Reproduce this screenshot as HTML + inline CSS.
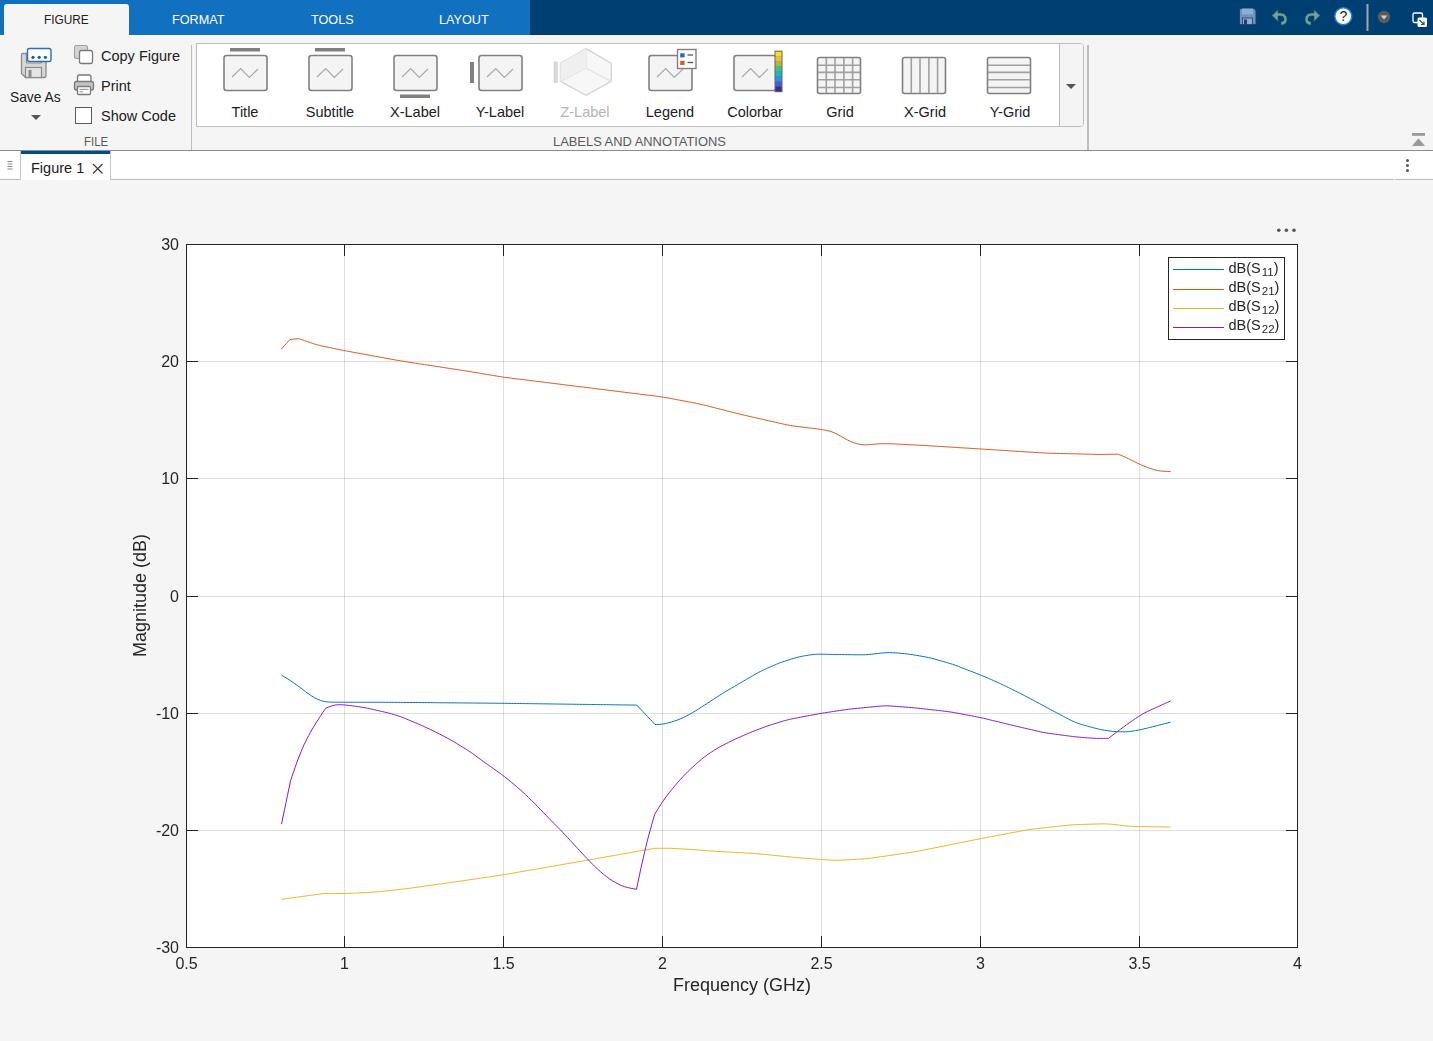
<!DOCTYPE html>
<html><head><meta charset="utf-8">
<style>
*{margin:0;padding:0;box-sizing:border-box}
html,body{width:1433px;height:1041px;overflow:hidden;background:#f5f5f5;font-family:"Liberation Sans",sans-serif;color:#212121}
.abs{position:absolute}
#topbar{position:absolute;left:0;top:0;width:1433px;height:35px;background:#003f72}
#tabs{position:absolute;left:0;top:0;width:530px;height:35px;background:#1170bf}
.tab{position:absolute;top:1.5px;height:35px;line-height:36px;font-size:13.6px;color:#fff;white-space:nowrap;transform:scaleX(0.93);transform-origin:0 0}
#tabfig{position:absolute;left:4px;top:4px;width:125px;height:31px;background:#f5f5f5;border-radius:3px 3px 0 0}
#strip{position:absolute;left:0;top:35px;width:1433px;height:116px;background:#f5f5f5;border-bottom:1px solid #8c8c8c}
.t14{font-size:14.5px;white-space:nowrap;position:absolute}
.glab{position:absolute;top:103.8px;font-size:14.5px;white-space:nowrap;text-align:center;width:84px;margin-left:-42px}
#figbar{position:absolute;left:0;top:151px;width:1433px;height:29px;background:#fff;border-bottom:1px solid #bdbdbd}
svg{position:absolute;left:0;top:0}
</style></head><body>
<div id="topbar"></div>
<div id="tabs"></div>
<div id="tabfig"></div>
<div class="tab" style="left:44px;color:#212121;transform:scaleX(0.87)">FIGURE</div>
<div class="tab" style="left:171.5px">FORMAT</div>
<div class="tab" style="left:310.5px">TOOLS</div>
<div class="tab" style="left:438.5px">LAYOUT</div>

<div id="strip"></div>
<!-- gallery box -->
<div class="abs" style="left:196px;top:43px;width:888px;height:84px;background:#fff;border:1px solid #bdbdbd;border-radius:0 4px 4px 0"></div>
<div class="abs" style="left:1059px;top:44px;width:24px;height:82px;background:#f4f4f4;border-left:1px solid #bdbdbd;border-radius:0 3px 3px 0"></div>
<div class="abs" style="left:191px;top:45px;width:1px;height:105px;background:#bdbdbd"></div>
<div class="abs" style="left:1087px;top:45px;width:2px;height:105px;background:#bdbdbd"></div>

<div class="t14" style="left:10px;top:89px;transform:scaleX(0.95);transform-origin:0 0">Save As</div>
<div class="t14" style="left:101px;top:48px">Copy Figure</div>
<div class="t14" style="left:101px;top:78px">Print</div>
<div class="t14" style="left:101px;top:108px">Show Code</div>
<div class="abs" style="left:84px;top:135px;font-size:12.5px;color:#5a5a5a;transform:scaleX(0.92);transform-origin:0 0">FILE</div>
<div class="abs" style="left:553px;top:134px;font-size:12.9px;color:#5a5a5a;white-space:nowrap">LABELS AND ANNOTATIONS</div>

<div class="glab" style="left:245px">Title</div>
<div class="glab" style="left:330px">Subtitle</div>
<div class="glab" style="left:415px">X-Label</div>
<div class="glab" style="left:500px">Y-Label</div>
<div class="glab" style="left:585px;color:#b4b4b4">Z-Label</div>
<div class="glab" style="left:670px">Legend</div>
<div class="glab" style="left:755px">Colorbar</div>
<div class="glab" style="left:840px">Grid</div>
<div class="glab" style="left:925px">X-Grid</div>
<div class="glab" style="left:1010px">Y-Grid</div>

<div id="figbar"></div>
<div class="abs" style="left:20px;top:151px;width:91px;height:29px;background:#fff;border-left:1px solid #c6c6c6;border-right:1px solid #c6c6c6"></div>
<div class="abs" style="left:21px;top:151px;width:89px;height:3px;background:#004b8a"></div>
<div class="abs" style="left:1394px;top:179px;width:1px;height:1px;background:#f8f8f8"></div>
<div class="abs" style="left:31px;top:160px;font-size:14.5px;white-space:nowrap">Figure 1</div>

<svg width="1433" height="200" viewBox="0 0 1433 200" style="position:absolute;left:0;top:0">
<!-- Save As floppy -->
<path d="M23,53.5 H44 a2,2 0 0 1 2,2 V75.5 a2,2 0 0 1 -2,2 H25.5 L21.5,73.5 V55 a1.5,1.5 0 0 1 1.5,-1.5 Z" fill="#d6d6d6" stroke="#8c8c8c" stroke-width="1.3"/>
<path d="M26.5,53.5 V62 a1,1 0 0 0 1,1 H40.5 a1,1 0 0 0 1,-1 V53.5" fill="#ececec" stroke="#8c8c8c" stroke-width="1.2"/>
<rect x="25.5" y="67.5" width="16" height="10" fill="#e4e4e4" stroke="#8c8c8c" stroke-width="1.2"/>
<rect x="28.5" y="70" width="3" height="7" fill="#8c8c8c"/>
<rect x="27.5" y="48.5" width="23.5" height="13" rx="2" fill="#fff" stroke="#2f6db5" stroke-width="1.4"/>
<circle cx="33" cy="57.3" r="1.6" fill="#1d5aa8"/><circle cx="39.2" cy="57.3" r="1.6" fill="#1d5aa8"/><circle cx="45.4" cy="57.3" r="1.6" fill="#1d5aa8"/>
<path d="M31,115 H41 L36,120 Z" fill="#555"/>
<!-- copy -->
<rect x="74.5" y="45.5" width="13" height="13" rx="2" fill="#d4d4d4" stroke="#a0a0a0" stroke-width="1.1"/>
<rect x="79.5" y="50.5" width="13" height="13" rx="2" fill="#fff" stroke="#7a7a7a" stroke-width="1.3"/>
<!-- print -->
<path d="M77.5,82 V77 a2,2 0 0 1 2,-2 H89 a2,2 0 0 1 2,2 V82" fill="#fff" stroke="#7a7a7a" stroke-width="1.3"/>
<rect x="74.5" y="81.5" width="19" height="8.5" rx="2" fill="#c4c4c4" stroke="#7a7a7a" stroke-width="1.3"/>
<rect x="77.5" y="86.5" width="13" height="8" rx="1" fill="#fff" stroke="#7a7a7a" stroke-width="1.3"/>
<line x1="79.5" y1="89.3" x2="88.5" y2="89.3" stroke="#8a8a8a" stroke-width="1"/>
<line x1="79.5" y1="91.8" x2="83" y2="91.8" stroke="#8a8a8a" stroke-width="1"/>
<!-- checkbox -->
<rect x="75.5" y="107.5" width="16" height="16" fill="#fff" stroke="#5a5a5a" stroke-width="1"/>

<!-- gallery icons: Title -->
<g stroke="#808080" fill="#f4f4f4" stroke-width="1.6">
<rect x="224" y="55.5" width="43" height="35" rx="2.5"/>
<rect x="309" y="55.5" width="43" height="35" rx="2.5"/>
<rect x="394" y="55.5" width="43" height="35" rx="2.5"/>
<rect x="479" y="55.5" width="43" height="35" rx="2.5"/>
<rect x="649" y="55.5" width="43" height="35" rx="2.5"/>
<rect x="734" y="55.5" width="42" height="35" rx="2.5"/>
</g>
<g fill="#808080">
<rect x="230" y="48" width="30" height="3.5"/>
<rect x="315" y="48" width="30" height="3.5"/>
<rect x="400" y="94.5" width="30" height="3.5"/>
<rect x="470" y="62" width="4" height="21"/>
</g>
<g stroke="#a6a6a6" fill="none" stroke-width="1.1">
<polyline points="232,77 240.7,68.6 249.3,77.5 258,69"/>
<polyline points="317,77 325.7,68.6 334.3,77.5 343,69"/>
<polyline points="402,77 410.7,68.6 419.3,77.5 428,69"/>
<polyline points="487,77 495.7,68.6 504.3,77.5 513,69"/>
<polyline points="657,77 665.7,68.6 674.3,77.5 683,69"/>
<polyline points="742,77 750.7,68.6 759.3,77.5 768,69"/>
</g>
<!-- Z-label -->
<g stroke="#d2d2d2" stroke-width="1.3" fill="none">
<path d="M586,48.6 L611.3,63.3 V81.3 L586,95.2 L560.4,81.3 V63.3 Z" fill="#f7f7f7"/>
<path d="M560.4,81.3 L586,68.2 L611.3,81.3 M586,48.6 V68.2" stroke="#e2e2e2"/>
</g>
<path d="M560.4,63.3 L586,48.6 V68.2 L560.4,81.3 Z" fill="#efefef"/>
<rect x="554" y="62" width="3.6" height="20.5" fill="#d9d9d9" stroke="#cfcfcf" stroke-width="0.6"/>
<!-- legend mini -->
<rect x="677.5" y="49.5" width="18.5" height="19" fill="#fff" stroke="#808080" stroke-width="1.4"/>
<rect x="680.2" y="53.3" width="4.4" height="4.1" fill="#1f6fc0"/>
<rect x="680.2" y="60.8" width="4.4" height="4.2" fill="#de5a1a"/>
<line x1="687.5" y1="55" x2="693" y2="55" stroke="#555" stroke-width="1.3"/>
<line x1="687.5" y1="62.5" x2="693" y2="62.5" stroke="#555" stroke-width="1.3"/>
<!-- colorbar strip -->
<rect x="774.5" y="50.7" width="8" height="41.5" fill="#666"/>
<g>
<rect x="775.5" y="51.7" width="6" height="5" fill="#f9e11e"/>
<rect x="775.5" y="56.7" width="6" height="5" fill="#f3b93a"/>
<rect x="775.5" y="61.7" width="6" height="5" fill="#a9bc36"/>
<rect x="775.5" y="66.7" width="6" height="5" fill="#3cbf8c"/>
<rect x="775.5" y="71.7" width="6" height="5" fill="#1cb4c8"/>
<rect x="775.5" y="76.7" width="6" height="5" fill="#2f8ee6"/>
<rect x="775.5" y="81.7" width="6" height="5" fill="#4a58e0"/>
<rect x="775.5" y="86.7" width="6" height="4.5" fill="#3b2a98"/>
</g>
<!-- grid icons -->
<g stroke="#808080" fill="#f4f4f4" stroke-width="1.6">
<rect x="817.5" y="57.5" width="43" height="36" rx="2"/>
<rect x="902.5" y="57.5" width="43" height="36" rx="2"/>
<rect x="987.5" y="57.5" width="43" height="36" rx="2"/>
</g>
<g stroke="#a0a0a0" stroke-width="1.6">
<line x1="826.3" y1="58" x2="826.3" y2="93"/><line x1="835" y1="58" x2="835" y2="93"/><line x1="843.9" y1="58" x2="843.9" y2="93"/><line x1="852.6" y1="58" x2="852.6" y2="93"/>
<line x1="818" y1="65.3" x2="860" y2="65.3"/><line x1="818" y1="72.4" x2="860" y2="72.4"/><line x1="818" y1="79.8" x2="860" y2="79.8"/><line x1="818" y1="87.5" x2="860" y2="87.5"/>
<line x1="911.3" y1="58" x2="911.3" y2="93"/><line x1="920" y1="58" x2="920" y2="93"/><line x1="928.9" y1="58" x2="928.9" y2="93"/><line x1="937.6" y1="58" x2="937.6" y2="93"/>
<line x1="988" y1="65.3" x2="1030" y2="65.3"/><line x1="988" y1="72.4" x2="1030" y2="72.4"/><line x1="988" y1="79.8" x2="1030" y2="79.8"/><line x1="988" y1="87.5" x2="1030" y2="87.5"/>
</g>
<!-- gallery dropdown arrow -->
<path d="M1066,84 H1076 L1071,89 Z" fill="#555"/>
<!-- collapse -->
<rect x="1412" y="133" width="13" height="2.8" fill="#9a9a9a"/>
<path d="M1412,146 L1418.5,138.3 L1425,146 Z" fill="#9a9a9a"/>

<!-- quick access: save -->
<path d="M1239.5,8.5 H1254 L1256,10.5 V24.5 H1239.5 Z" fill="#6f93bd" stroke="#1f3f66" stroke-width="1"/>
<rect x="1242" y="8.5" width="11" height="6" fill="#8eaed2"/>
<rect x="1242.5" y="18" width="10" height="6.5" fill="#8eaed2" stroke="#1f3f66" stroke-width="0.8"/>
<rect x="1244" y="19.5" width="3" height="5" fill="#1f3f66"/>
<!-- undo -->
<path d="M1272,15.5 L1278,9.5 V13 H1281 a6,6 0 0 1 6,6 v1 a5,5 0 0 1 -5,5 h-1 v-3.5 h1 a2,2 0 0 0 2,-2 v-0.5 a3,3 0 0 0 -3,-3 H1278 V21.5 Z" fill="#6fa39d" stroke="#184a50" stroke-width="0.6"/>
<!-- redo -->
<path d="M1320,15.5 L1314,9.5 V13 H1311 a6,6 0 0 0 -6,6 v1 a5,5 0 0 0 5,5 h1 v-3.5 h-1 a2,2 0 0 1 -2,-2 v-0.5 a3,3 0 0 1 3,-3 H1314 V21.5 Z" fill="#6fa39d" stroke="#184a50" stroke-width="0.6"/>
<!-- help -->
<circle cx="1343.3" cy="16.3" r="8.5" fill="#fff" stroke="#1e7fe0" stroke-width="1.4"/>
<text x="1343.3" y="21.3" text-anchor="middle" font-family="Liberation Sans, sans-serif" font-size="14" fill="#222">?</text>
<rect x="1366.5" y="4" width="2" height="27" fill="#a6a6a6"/>
<circle cx="1384" cy="17" r="6.2" fill="#5a5a5a"/>
<path d="M1380.5,15.5 H1387.5 L1384,19.5 Z" fill="#c6d0da"/>
<!-- undock -->
<rect x="1413" y="13" width="9.5" height="9.5" rx="1.5" fill="none" stroke="#fff" stroke-width="1.3"/>
<rect x="1417.5" y="17.5" width="9.5" height="9.5" rx="1.5" fill="#fff"/>
<path d="M1419.5,20 L1424,24.5 M1424,21.5 V24.5 H1421" stroke="#1f4f8a" stroke-width="1.2" fill="none"/>

<!-- fig tab bar -->
<g fill="#8a8a8a"><rect x="7.5" y="161" width="5" height="1"/><rect x="7.5" y="163.5" width="5" height="1"/><rect x="7.5" y="166" width="5" height="1"/><rect x="7.5" y="168.5" width="5" height="1"/></g>
<path d="M93,164 L102.5,173.5 M102.5,164 L93,173.5" stroke="#3a3a3a" stroke-width="1.2"/>
<g fill="#555"><circle cx="1407.5" cy="160.4" r="1.5"/><circle cx="1407.5" cy="165.5" r="1.5"/><circle cx="1407.5" cy="170.5" r="1.5"/></g>
</svg>

<svg class="plot" style="will-change:transform" width="1433" height="1041" viewBox="0 0 1433 1041">
<rect x="186" y="244" width="1111" height="703" fill="#fff"/>
<g stroke="#262626" stroke-opacity="0.15" stroke-width="1" shape-rendering="crispEdges"><line x1="344.5" y1="244" x2="344.5" y2="947"/><line x1="503.5" y1="244" x2="503.5" y2="947"/><line x1="662.5" y1="244" x2="662.5" y2="947"/><line x1="821.5" y1="244" x2="821.5" y2="947"/><line x1="980.5" y1="244" x2="980.5" y2="947"/><line x1="1139.5" y1="244" x2="1139.5" y2="947"/><line x1="186" y1="361.5" x2="1297" y2="361.5"/><line x1="186" y1="478.5" x2="1297" y2="478.5"/><line x1="186" y1="596.5" x2="1297" y2="596.5"/><line x1="186" y1="713.5" x2="1297" y2="713.5"/><line x1="186" y1="830.5" x2="1297" y2="830.5"/></g>
<g fill="none" stroke-width="1" stroke-linejoin="round">
<path stroke="#0072BD" d="M281.5,675.10 L283.0,676.01 L284.5,676.92 L286.0,677.84 L287.5,678.78 L289.0,679.73 L290.5,680.72 L292.0,681.73 L293.5,682.77 L295.0,683.83 L296.6,684.92 L298.1,686.03 L299.6,687.15 L301.1,688.29 L302.6,689.44 L304.1,690.59 L305.6,691.73 L307.1,692.85 L308.6,693.93 L310.1,694.97 L311.6,695.96 L313.1,696.89 L314.6,697.76 L316.1,698.55 L317.6,699.25 L319.1,699.88 L320.6,700.43 L322.1,700.90 L323.7,701.29 L325.2,701.60 L326.7,701.84 L328.2,702.00 L329.7,702.10 L331.2,702.16 L332.7,702.19 L334.2,702.21 L335.7,702.21 L337.2,702.22 L338.7,702.22 L340.2,702.22 L341.7,702.23 L343.2,702.23 L344.7,702.23 L346.2,702.23 L347.7,702.24 L349.2,702.24 L350.8,702.24 L352.3,702.24 L353.8,702.24 L355.3,702.25 L356.8,702.25 L358.3,702.25 L359.8,702.25 L361.3,702.26 L362.8,702.26 L364.3,702.26 L365.8,702.26 L367.3,702.27 L368.8,702.27 L370.3,702.27 L371.8,702.27 L373.3,702.28 L374.8,702.28 L376.3,702.28 L377.9,702.28 L379.4,702.29 L380.9,702.29 L382.4,702.29 L383.9,702.29 L385.4,702.30 L386.9,702.30 L388.4,702.31 L389.9,702.32 L391.4,702.33 L392.9,702.34 L394.4,702.35 L395.9,702.36 L397.4,702.38 L398.9,702.39 L400.4,702.40 L401.9,702.41 L403.4,702.43 L405.0,702.44 L406.5,702.45 L408.0,702.47 L409.5,702.48 L411.0,702.49 L412.5,702.51 L414.0,702.52 L415.5,702.53 L417.0,702.54 L418.5,702.56 L420.0,702.57 L421.5,702.58 L423.0,702.60 L424.5,702.61 L426.0,702.62 L427.5,702.63 L429.0,702.65 L430.5,702.66 L432.1,702.67 L433.6,702.69 L435.1,702.70 L436.6,702.71 L438.1,702.73 L439.6,702.74 L441.1,702.75 L442.6,702.76 L444.1,702.78 L445.6,702.79 L447.1,702.80 L448.6,702.82 L450.1,702.83 L451.6,702.84 L453.1,702.85 L454.6,702.87 L456.1,702.88 L457.6,702.89 L459.1,702.91 L460.7,702.92 L462.2,702.93 L463.7,702.95 L465.2,702.96 L466.7,702.97 L468.2,702.98 L469.7,703.00 L471.2,703.01 L472.7,703.02 L474.2,703.04 L475.7,703.05 L477.2,703.07 L478.7,703.08 L480.2,703.09 L481.7,703.11 L483.2,703.12 L484.7,703.13 L486.2,703.15 L487.8,703.16 L489.3,703.17 L490.8,703.19 L492.3,703.20 L493.8,703.21 L495.3,703.23 L496.8,703.24 L498.3,703.26 L499.8,703.27 L501.3,703.29 L502.8,703.30 L504.3,703.32 L505.8,703.34 L507.3,703.36 L508.8,703.38 L510.3,703.40 L511.8,703.42 L513.3,703.44 L514.9,703.46 L516.4,703.48 L517.9,703.50 L519.4,703.52 L520.9,703.54 L522.4,703.56 L523.9,703.58 L525.4,703.60 L526.9,703.62 L528.4,703.64 L529.9,703.66 L531.4,703.68 L532.9,703.70 L534.4,703.72 L535.9,703.74 L537.4,703.76 L538.9,703.78 L540.4,703.80 L542.0,703.82 L543.5,703.84 L545.0,703.86 L546.5,703.88 L548.0,703.90 L549.5,703.92 L551.0,703.94 L552.5,703.96 L554.0,703.98 L555.5,704.00 L557.0,704.02 L558.5,704.04 L560.0,704.06 L561.5,704.09 L563.0,704.11 L564.5,704.13 L566.0,704.15 L567.5,704.17 L569.1,704.19 L570.6,704.21 L572.1,704.23 L573.6,704.25 L575.1,704.27 L576.6,704.29 L578.1,704.31 L579.6,704.33 L581.1,704.35 L582.6,704.37 L584.1,704.39 L585.6,704.41 L587.1,704.43 L588.6,704.45 L590.1,704.47 L591.6,704.49 L593.1,704.51 L594.6,704.53 L596.2,704.55 L597.7,704.57 L599.2,704.59 L600.7,704.61 L602.2,704.63 L603.7,704.65 L605.2,704.67 L606.7,704.69 L608.2,704.71 L609.7,704.73 L611.2,704.75 L612.7,704.78 L614.2,704.80 L615.7,704.82 L617.2,704.84 L618.7,704.86 L620.2,704.88 L621.7,704.90 L623.3,704.92 L624.8,704.94 L626.3,704.96 L627.8,704.98 L629.3,705.00 L630.8,705.02 L632.3,705.04 L633.8,705.06 L635.3,705.08 L636.8,705.10 L638.3,706.72 L639.8,708.33 L641.3,709.95 L642.9,711.57 L644.4,713.18 L645.9,714.80 L647.4,716.42 L648.9,718.03 L650.5,719.65 L652.0,721.27 L653.5,722.88 L655.0,724.50 L656.5,724.48 L658.0,724.44 L659.5,724.37 L661.0,724.25 L662.5,724.08 L664.0,723.84 L665.5,723.54 L667.0,723.19 L668.5,722.81 L670.0,722.39 L671.5,721.96 L673.0,721.51 L674.5,721.04 L676.0,720.53 L677.5,719.99 L679.0,719.39 L680.5,718.76 L682.1,718.07 L683.6,717.36 L685.1,716.62 L686.6,715.86 L688.1,715.09 L689.6,714.29 L691.1,713.47 L692.6,712.62 L694.1,711.73 L695.6,710.82 L697.1,709.88 L698.6,708.93 L700.1,707.96 L701.6,707.00 L703.1,706.03 L704.6,705.06 L706.1,704.09 L707.6,703.12 L709.1,702.14 L710.6,701.17 L712.1,700.20 L713.6,699.23 L715.1,698.26 L716.6,697.29 L718.1,696.33 L719.6,695.36 L721.1,694.40 L722.6,693.46 L724.1,692.52 L725.6,691.60 L727.1,690.69 L728.6,689.79 L730.1,688.90 L731.6,688.02 L733.2,687.13 L734.7,686.25 L736.2,685.37 L737.7,684.49 L739.2,683.61 L740.7,682.73 L742.2,681.85 L743.7,680.97 L745.2,680.09 L746.7,679.21 L748.2,678.33 L749.7,677.45 L751.2,676.57 L752.7,675.69 L754.2,674.82 L755.7,673.97 L757.2,673.13 L758.7,672.32 L760.2,671.54 L761.7,670.79 L763.2,670.07 L764.7,669.38 L766.2,668.71 L767.7,668.05 L769.2,667.39 L770.7,666.73 L772.2,666.08 L773.7,665.43 L775.2,664.79 L776.7,664.15 L778.2,663.54 L779.7,662.94 L781.2,662.38 L782.7,661.84 L784.3,661.33 L785.8,660.83 L787.3,660.36 L788.8,659.89 L790.3,659.42 L791.8,658.96 L793.3,658.51 L794.8,658.07 L796.3,657.65 L797.8,657.26 L799.3,656.89 L800.8,656.56 L802.3,656.25 L803.8,655.98 L805.3,655.71 L806.8,655.46 L808.3,655.22 L809.8,654.99 L811.3,654.78 L812.8,654.58 L814.3,654.42 L815.8,654.30 L817.3,654.22 L818.8,654.18 L820.3,654.18 L821.8,654.19 L823.3,654.22 L824.8,654.26 L826.3,654.30 L827.8,654.33 L829.3,654.37 L830.8,654.40 L832.3,654.43 L833.8,654.45 L835.3,654.47 L836.9,654.50 L838.4,654.52 L839.9,654.54 L841.4,654.56 L842.9,654.58 L844.4,654.60 L845.9,654.62 L847.4,654.64 L848.9,654.66 L850.4,654.68 L851.9,654.70 L853.4,654.72 L854.9,654.75 L856.4,654.76 L857.9,654.78 L859.4,654.80 L860.9,654.80 L862.4,654.80 L863.9,654.77 L865.4,654.72 L866.9,654.63 L868.4,654.52 L869.9,654.39 L871.4,654.23 L872.9,654.06 L874.4,653.88 L875.9,653.70 L877.4,653.53 L878.9,653.35 L880.4,653.19 L881.9,653.03 L883.4,652.90 L884.9,652.80 L886.4,652.73 L888.0,652.68 L889.5,652.67 L891.0,652.69 L892.5,652.73 L894.0,652.79 L895.5,652.87 L897.0,652.97 L898.5,653.09 L900.0,653.21 L901.5,653.34 L903.0,653.48 L904.5,653.64 L906.0,653.82 L907.5,654.01 L909.0,654.21 L910.5,654.43 L912.0,654.65 L913.5,654.88 L915.0,655.11 L916.5,655.35 L918.0,655.60 L919.5,655.86 L921.0,656.12 L922.5,656.39 L924.0,656.67 L925.5,656.95 L927.0,657.25 L928.5,657.57 L930.0,657.91 L931.5,658.27 L933.0,658.65 L934.5,659.05 L936.0,659.47 L937.5,659.89 L939.1,660.32 L940.6,660.76 L942.1,661.19 L943.6,661.63 L945.1,662.07 L946.6,662.51 L948.1,662.95 L949.6,663.40 L951.1,663.86 L952.6,664.34 L954.1,664.83 L955.6,665.35 L957.1,665.89 L958.6,666.46 L960.1,667.04 L961.6,667.63 L963.1,668.24 L964.6,668.84 L966.1,669.43 L967.6,670.02 L969.1,670.60 L970.6,671.17 L972.1,671.73 L973.6,672.29 L975.1,672.85 L976.6,673.41 L978.1,673.99 L979.6,674.58 L981.1,675.19 L982.6,675.81 L984.1,676.45 L985.6,677.10 L987.1,677.76 L988.6,678.43 L990.2,679.09 L991.7,679.76 L993.2,680.43 L994.7,681.10 L996.2,681.77 L997.7,682.45 L999.2,683.13 L1000.7,683.82 L1002.2,684.53 L1003.7,685.24 L1005.2,685.97 L1006.7,686.71 L1008.2,687.45 L1009.7,688.20 L1011.2,688.95 L1012.7,689.70 L1014.2,690.45 L1015.7,691.20 L1017.2,691.95 L1018.7,692.70 L1020.2,693.46 L1021.7,694.21 L1023.2,694.96 L1024.7,695.72 L1026.2,696.49 L1027.7,697.26 L1029.2,698.05 L1030.7,698.84 L1032.2,699.64 L1033.7,700.44 L1035.2,701.25 L1036.7,702.07 L1038.2,702.88 L1039.7,703.70 L1041.2,704.51 L1042.8,705.32 L1044.3,706.14 L1045.8,706.95 L1047.3,707.77 L1048.8,708.58 L1050.3,709.39 L1051.8,710.20 L1053.3,711.01 L1054.8,711.82 L1056.3,712.62 L1057.8,713.41 L1059.3,714.21 L1060.8,715.00 L1062.3,715.79 L1063.8,716.59 L1065.3,717.38 L1066.8,718.16 L1068.3,718.95 L1069.8,719.72 L1071.3,720.47 L1072.8,721.19 L1074.3,721.87 L1075.8,722.49 L1077.3,723.06 L1078.8,723.58 L1080.3,724.06 L1081.8,724.51 L1083.3,724.94 L1084.8,725.37 L1086.3,725.79 L1087.8,726.21 L1089.3,726.63 L1090.8,727.05 L1092.3,727.46 L1093.9,727.87 L1095.4,728.27 L1096.9,728.66 L1098.4,729.02 L1099.9,729.36 L1101.4,729.67 L1102.9,729.95 L1104.4,730.21 L1105.9,730.44 L1107.4,730.66 L1108.9,730.87 L1110.4,731.06 L1111.9,731.23 L1113.4,731.38 L1114.9,731.50 L1116.4,731.61 L1117.9,731.69 L1119.4,731.76 L1120.9,731.82 L1122.4,731.85 L1123.9,731.86 L1125.4,731.83 L1126.9,731.75 L1128.4,731.63 L1129.9,731.47 L1131.4,731.27 L1132.9,731.05 L1134.4,730.80 L1135.9,730.55 L1137.4,730.28 L1138.9,730.00 L1140.4,729.69 L1141.9,729.37 L1143.4,729.03 L1145.0,728.67 L1146.5,728.30 L1148.0,727.93 L1149.5,727.55 L1151.0,727.17 L1152.5,726.78 L1154.0,726.40 L1155.5,726.02 L1157.0,725.64 L1158.5,725.26 L1160.0,724.87 L1161.5,724.49 L1163.0,724.11 L1164.5,723.73 L1166.0,723.35 L1167.5,722.96 L1169.0,722.58 L1170.5,722.20"/>
<path stroke="#D95319" d="M281.4,349.00 L283.1,347.10 L284.8,345.20 L286.6,343.30 L288.3,341.40 L290.0,339.50 L291.7,339.32 L293.4,339.14 L295.2,338.96 L296.9,338.78 L298.6,338.60 L300.1,339.12 L301.6,339.63 L303.1,340.15 L304.6,340.66 L306.1,341.18 L307.6,341.69 L309.1,342.21 L310.6,342.72 L312.1,343.22 L313.6,343.71 L315.1,344.18 L316.6,344.63 L318.1,345.04 L319.6,345.43 L321.1,345.79 L322.6,346.12 L324.1,346.45 L325.6,346.76 L327.1,347.08 L328.6,347.39 L330.1,347.70 L331.6,348.00 L333.1,348.31 L334.6,348.62 L336.1,348.93 L337.6,349.24 L339.1,349.55 L340.6,349.85 L342.1,350.15 L343.6,350.45 L345.1,350.74 L346.6,351.03 L348.1,351.31 L349.6,351.59 L351.1,351.87 L352.6,352.15 L354.1,352.42 L355.6,352.69 L357.1,352.97 L358.6,353.24 L360.1,353.52 L361.6,353.79 L363.1,354.07 L364.6,354.34 L366.1,354.61 L367.6,354.89 L369.1,355.16 L370.6,355.44 L372.1,355.71 L373.6,355.99 L375.1,356.26 L376.6,356.53 L378.1,356.81 L379.6,357.08 L381.1,357.36 L382.6,357.63 L384.1,357.91 L385.6,358.18 L387.1,358.45 L388.6,358.73 L390.1,359.00 L391.6,359.28 L393.1,359.55 L394.6,359.82 L396.1,360.09 L397.6,360.36 L399.1,360.62 L400.6,360.88 L402.1,361.12 L403.6,361.37 L405.1,361.61 L406.6,361.84 L408.1,362.07 L409.6,362.30 L411.1,362.54 L412.6,362.77 L414.1,363.00 L415.6,363.23 L417.1,363.46 L418.6,363.69 L420.1,363.92 L421.6,364.15 L423.1,364.38 L424.6,364.62 L426.1,364.85 L427.6,365.08 L429.1,365.31 L430.6,365.54 L432.1,365.77 L433.6,366.00 L435.1,366.23 L436.6,366.46 L438.1,366.69 L439.6,366.93 L441.1,367.16 L442.6,367.39 L444.1,367.62 L445.6,367.85 L447.1,368.08 L448.6,368.31 L450.1,368.54 L451.6,368.77 L453.1,369.00 L454.6,369.23 L456.1,369.47 L457.6,369.70 L459.1,369.93 L460.6,370.16 L462.1,370.39 L463.6,370.62 L465.1,370.85 L466.6,371.09 L468.1,371.32 L469.6,371.56 L471.1,371.81 L472.6,372.05 L474.1,372.30 L475.6,372.55 L477.1,372.79 L478.6,373.05 L480.1,373.30 L481.6,373.55 L483.1,373.80 L484.6,374.05 L486.1,374.30 L487.6,374.55 L489.1,374.80 L490.6,375.05 L492.1,375.30 L493.6,375.55 L495.1,375.80 L496.6,376.05 L498.1,376.30 L499.6,376.54 L501.1,376.78 L502.6,377.01 L504.2,377.23 L505.7,377.44 L507.2,377.64 L508.7,377.83 L510.2,378.02 L511.7,378.21 L513.2,378.40 L514.7,378.59 L516.2,378.77 L517.7,378.96 L519.2,379.15 L520.7,379.33 L522.2,379.52 L523.7,379.71 L525.2,379.89 L526.7,380.08 L528.2,380.27 L529.7,380.45 L531.2,380.64 L532.7,380.83 L534.2,381.01 L535.7,381.20 L537.2,381.39 L538.7,381.57 L540.2,381.76 L541.7,381.95 L543.2,382.13 L544.7,382.32 L546.2,382.51 L547.7,382.69 L549.2,382.88 L550.7,383.07 L552.2,383.25 L553.7,383.44 L555.2,383.63 L556.7,383.81 L558.2,384.00 L559.7,384.19 L561.2,384.37 L562.7,384.56 L564.2,384.74 L565.7,384.93 L567.2,385.12 L568.7,385.30 L570.2,385.49 L571.7,385.68 L573.2,385.86 L574.7,386.05 L576.2,386.24 L577.7,386.42 L579.2,386.61 L580.7,386.80 L582.2,386.98 L583.7,387.17 L585.2,387.36 L586.7,387.54 L588.2,387.73 L589.7,387.92 L591.2,388.10 L592.7,388.29 L594.2,388.48 L595.7,388.66 L597.2,388.85 L598.7,389.04 L600.2,389.22 L601.7,389.41 L603.2,389.60 L604.7,389.78 L606.2,389.97 L607.7,390.16 L609.2,390.34 L610.7,390.53 L612.2,390.72 L613.7,390.90 L615.2,391.09 L616.7,391.28 L618.2,391.46 L619.7,391.65 L621.2,391.84 L622.7,392.02 L624.2,392.21 L625.7,392.40 L627.2,392.58 L628.7,392.77 L630.2,392.96 L631.7,393.14 L633.2,393.33 L634.7,393.52 L636.2,393.70 L637.7,393.89 L639.2,394.08 L640.7,394.26 L642.2,394.45 L643.7,394.63 L645.2,394.82 L646.7,395.01 L648.2,395.19 L649.7,395.38 L651.2,395.57 L652.7,395.76 L654.2,395.94 L655.7,396.13 L657.2,396.32 L658.7,396.52 L660.2,396.73 L661.7,396.95 L663.2,397.18 L664.7,397.42 L666.2,397.68 L667.7,397.95 L669.2,398.22 L670.7,398.50 L672.2,398.78 L673.7,399.06 L675.2,399.34 L676.7,399.63 L678.2,399.91 L679.7,400.19 L681.2,400.47 L682.7,400.75 L684.2,401.03 L685.7,401.32 L687.2,401.60 L688.7,401.88 L690.2,402.16 L691.7,402.44 L693.2,402.73 L694.7,403.02 L696.2,403.31 L697.7,403.62 L699.2,403.93 L700.7,404.27 L702.2,404.61 L703.7,404.97 L705.2,405.34 L706.7,405.72 L708.2,406.10 L709.7,406.48 L711.2,406.86 L712.7,407.25 L714.2,407.63 L715.7,408.01 L717.2,408.40 L718.7,408.78 L720.2,409.16 L721.7,409.55 L723.2,409.93 L724.7,410.31 L726.2,410.70 L727.7,411.08 L729.2,411.46 L730.7,411.85 L732.2,412.23 L733.7,412.61 L735.2,412.99 L736.7,413.37 L738.2,413.74 L739.7,414.11 L741.2,414.47 L742.7,414.83 L744.2,415.18 L745.7,415.52 L747.2,415.87 L748.7,416.21 L750.2,416.55 L751.7,416.89 L753.2,417.23 L754.7,417.57 L756.2,417.91 L757.7,418.25 L759.2,418.59 L760.7,418.94 L762.2,419.28 L763.7,419.62 L765.2,419.96 L766.7,420.30 L768.2,420.64 L769.7,420.98 L771.2,421.32 L772.7,421.66 L774.2,422.00 L775.7,422.34 L777.2,422.68 L778.7,423.02 L780.2,423.36 L781.7,423.70 L783.2,424.04 L784.7,424.37 L786.2,424.70 L787.7,425.01 L789.2,425.30 L790.7,425.57 L792.2,425.81 L793.7,426.03 L795.2,426.24 L796.7,426.43 L798.2,426.62 L799.7,426.80 L801.2,426.98 L802.7,427.16 L804.2,427.34 L805.7,427.52 L807.2,427.70 L808.7,427.88 L810.2,428.05 L811.7,428.23 L813.2,428.41 L814.7,428.60 L816.2,428.78 L817.7,428.97 L819.2,429.17 L820.7,429.39 L822.2,429.62 L823.7,429.86 L825.2,430.13 L826.7,430.43 L828.2,430.76 L829.7,431.15 L831.2,431.61 L832.7,432.15 L834.2,432.79 L835.7,433.50 L837.2,434.27 L838.7,435.08 L840.2,435.93 L841.7,436.78 L843.2,437.63 L844.7,438.48 L846.2,439.30 L847.7,440.09 L849.2,440.84 L850.7,441.53 L852.2,442.15 L853.7,442.71 L855.2,443.20 L856.7,443.63 L858.2,444.00 L859.7,444.30 L861.2,444.53 L862.7,444.68 L864.2,444.75 L865.7,444.77 L867.2,444.73 L868.7,444.65 L870.2,444.55 L871.7,444.41 L873.2,444.27 L874.7,444.13 L876.2,444.00 L877.7,443.90 L879.2,443.82 L880.7,443.76 L882.2,443.73 L883.7,443.72 L885.2,443.71 L886.7,443.72 L888.2,443.73 L889.7,443.76 L891.2,443.79 L892.7,443.84 L894.2,443.90 L895.7,443.97 L897.2,444.04 L898.7,444.12 L900.2,444.20 L901.7,444.28 L903.2,444.36 L904.7,444.44 L906.2,444.52 L907.7,444.60 L909.2,444.68 L910.7,444.76 L912.2,444.84 L913.8,444.93 L915.3,445.01 L916.8,445.09 L918.3,445.17 L919.8,445.25 L921.3,445.33 L922.8,445.41 L924.3,445.49 L925.8,445.57 L927.3,445.66 L928.8,445.74 L930.3,445.83 L931.8,445.92 L933.3,446.01 L934.8,446.10 L936.3,446.19 L937.8,446.29 L939.3,446.38 L940.8,446.48 L942.3,446.57 L943.8,446.67 L945.3,446.76 L946.8,446.86 L948.3,446.95 L949.8,447.04 L951.3,447.14 L952.8,447.23 L954.3,447.33 L955.8,447.42 L957.3,447.52 L958.8,447.61 L960.3,447.71 L961.8,447.80 L963.3,447.90 L964.8,447.99 L966.3,448.08 L967.8,448.18 L969.3,448.27 L970.8,448.37 L972.3,448.46 L973.8,448.56 L975.3,448.65 L976.8,448.75 L978.3,448.84 L979.8,448.94 L981.3,449.03 L982.8,449.13 L984.3,449.22 L985.8,449.32 L987.3,449.41 L988.8,449.51 L990.3,449.60 L991.8,449.70 L993.3,449.79 L994.8,449.89 L996.3,449.98 L997.8,450.08 L999.3,450.17 L1000.8,450.27 L1002.3,450.36 L1003.8,450.46 L1005.3,450.55 L1006.8,450.65 L1008.3,450.74 L1009.8,450.84 L1011.3,450.93 L1012.8,451.03 L1014.3,451.12 L1015.8,451.22 L1017.3,451.31 L1018.8,451.41 L1020.3,451.50 L1021.8,451.60 L1023.3,451.69 L1024.8,451.79 L1026.3,451.89 L1027.8,451.98 L1029.3,452.08 L1030.8,452.17 L1032.3,452.27 L1033.8,452.36 L1035.3,452.46 L1036.8,452.55 L1038.3,452.65 L1039.8,452.74 L1041.3,452.83 L1042.8,452.92 L1044.3,453.00 L1045.8,453.08 L1047.3,453.15 L1048.8,453.21 L1050.3,453.26 L1051.8,453.31 L1053.3,453.35 L1054.8,453.38 L1056.3,453.42 L1057.8,453.46 L1059.3,453.49 L1060.8,453.53 L1062.3,453.56 L1063.8,453.60 L1065.3,453.64 L1066.8,453.67 L1068.3,453.71 L1069.8,453.74 L1071.3,453.78 L1072.8,453.82 L1074.3,453.85 L1075.8,453.89 L1077.3,453.92 L1078.8,453.96 L1080.3,453.99 L1081.8,454.03 L1083.3,454.07 L1084.8,454.10 L1086.3,454.14 L1087.8,454.17 L1089.3,454.21 L1090.8,454.24 L1092.3,454.28 L1093.8,454.31 L1095.3,454.35 L1096.8,454.38 L1098.3,454.40 L1099.8,454.42 L1101.3,454.42 L1102.8,454.42 L1104.3,454.40 L1105.8,454.38 L1107.3,454.35 L1108.8,454.32 L1110.3,454.28 L1111.8,454.25 L1113.3,454.21 L1114.8,454.17 L1116.3,454.14 L1117.8,454.10 L1119.3,454.70 L1120.8,455.31 L1122.3,455.92 L1123.8,456.56 L1125.3,457.21 L1126.8,457.90 L1128.3,458.62 L1129.8,459.37 L1131.4,460.13 L1132.9,460.91 L1134.4,461.68 L1135.9,462.44 L1137.4,463.17 L1138.9,463.87 L1140.4,464.54 L1141.9,465.19 L1143.4,465.81 L1144.9,466.42 L1146.4,467.02 L1147.9,467.60 L1149.4,468.15 L1150.9,468.67 L1152.4,469.15 L1153.9,469.59 L1155.4,469.98 L1156.9,470.32 L1158.5,470.62 L1160.0,470.86 L1161.5,471.06 L1163.0,471.20 L1164.5,471.29 L1166.0,471.35 L1167.5,471.38 L1169.0,471.39 L1170.5,471.40"/>
<path stroke="#EDB120" d="M281.6,899.30 L283.1,899.09 L284.6,898.89 L286.1,898.68 L287.6,898.47 L289.1,898.26 L290.6,898.06 L292.2,897.85 L293.7,897.64 L295.2,897.44 L296.7,897.23 L298.2,897.02 L299.7,896.81 L301.2,896.61 L302.7,896.40 L304.2,896.19 L305.7,895.99 L307.2,895.78 L308.7,895.57 L310.2,895.36 L311.7,895.16 L313.2,894.95 L314.8,894.74 L316.3,894.54 L317.8,894.33 L319.3,894.12 L320.8,893.91 L322.3,893.71 L323.8,893.50 L325.3,893.50 L326.8,893.50 L328.3,893.50 L329.8,893.50 L331.3,893.50 L332.8,893.50 L334.3,893.50 L335.8,893.50 L337.3,893.50 L338.8,893.50 L340.3,893.50 L341.8,893.50 L343.3,893.50 L344.8,893.50 L346.3,893.44 L347.8,893.37 L349.3,893.31 L350.8,893.24 L352.3,893.18 L353.8,893.11 L355.3,893.05 L356.8,892.98 L358.4,892.92 L359.9,892.85 L361.4,892.79 L362.9,892.72 L364.4,892.66 L365.9,892.59 L367.4,892.52 L368.9,892.44 L370.4,892.35 L371.9,892.26 L373.4,892.14 L374.9,892.02 L376.4,891.88 L377.9,891.74 L379.4,891.58 L380.9,891.43 L382.4,891.27 L384.0,891.11 L385.5,890.95 L387.0,890.79 L388.5,890.63 L390.0,890.47 L391.5,890.31 L393.0,890.15 L394.5,890.00 L396.0,889.84 L397.5,889.68 L399.0,889.52 L400.5,889.35 L402.0,889.19 L403.5,889.02 L405.0,888.84 L406.5,888.65 L408.0,888.46 L409.6,888.26 L411.1,888.06 L412.6,887.85 L414.1,887.64 L415.6,887.44 L417.1,887.23 L418.6,887.02 L420.1,886.81 L421.6,886.59 L423.1,886.38 L424.6,886.17 L426.1,885.96 L427.6,885.75 L429.1,885.54 L430.6,885.33 L432.1,885.12 L433.6,884.91 L435.1,884.70 L436.7,884.49 L438.2,884.28 L439.7,884.07 L441.2,883.86 L442.7,883.65 L444.2,883.44 L445.7,883.23 L447.2,883.02 L448.7,882.80 L450.2,882.59 L451.7,882.37 L453.2,882.15 L454.7,881.93 L456.2,881.71 L457.7,881.49 L459.2,881.27 L460.7,881.05 L462.3,880.83 L463.8,880.61 L465.3,880.39 L466.8,880.17 L468.3,879.95 L469.8,879.73 L471.3,879.51 L472.8,879.29 L474.3,879.07 L475.8,878.85 L477.3,878.63 L478.8,878.41 L480.3,878.19 L481.8,877.97 L483.3,877.75 L484.8,877.53 L486.3,877.31 L487.9,877.09 L489.4,876.87 L490.9,876.65 L492.4,876.43 L493.9,876.21 L495.4,875.99 L496.9,875.76 L498.4,875.54 L499.9,875.31 L501.4,875.08 L502.9,874.85 L504.4,874.60 L505.9,874.35 L507.4,874.09 L508.9,873.83 L510.4,873.57 L511.9,873.31 L513.5,873.04 L515.0,872.77 L516.5,872.51 L518.0,872.24 L519.5,871.98 L521.0,871.71 L522.5,871.45 L524.0,871.18 L525.5,870.92 L527.0,870.66 L528.5,870.39 L530.0,870.13 L531.5,869.87 L533.0,869.61 L534.5,869.35 L536.0,869.09 L537.5,868.83 L539.1,868.57 L540.6,868.30 L542.1,868.04 L543.6,867.78 L545.1,867.52 L546.6,867.26 L548.1,867.00 L549.6,866.74 L551.1,866.48 L552.6,866.22 L554.1,865.96 L555.6,865.69 L557.1,865.43 L558.6,865.17 L560.1,864.91 L561.6,864.65 L563.1,864.39 L564.7,864.13 L566.2,863.87 L567.7,863.61 L569.2,863.35 L570.7,863.09 L572.2,862.82 L573.7,862.56 L575.2,862.30 L576.7,862.04 L578.2,861.78 L579.7,861.52 L581.2,861.26 L582.7,861.00 L584.2,860.74 L585.7,860.47 L587.2,860.21 L588.7,859.95 L590.2,859.69 L591.8,859.42 L593.3,859.16 L594.8,858.89 L596.3,858.63 L597.8,858.36 L599.3,858.10 L600.8,857.83 L602.3,857.57 L603.8,857.30 L605.3,857.04 L606.8,856.77 L608.3,856.51 L609.8,856.24 L611.3,855.98 L612.8,855.71 L614.3,855.45 L615.8,855.19 L617.4,854.92 L618.9,854.66 L620.4,854.39 L621.9,854.13 L623.4,853.86 L624.9,853.60 L626.4,853.33 L627.9,853.07 L629.4,852.80 L630.9,852.54 L632.4,852.27 L633.9,852.01 L635.4,851.74 L636.9,851.48 L638.4,851.21 L639.9,850.95 L641.4,850.68 L643.0,850.42 L644.5,850.15 L646.0,849.89 L647.5,849.62 L649.0,849.36 L650.5,849.09 L652.0,848.83 L653.5,848.56 L655.0,848.30 L656.5,848.29 L658.0,848.28 L659.5,848.27 L661.0,848.26 L662.5,848.25 L664.0,848.25 L665.5,848.25 L667.0,848.26 L668.5,848.28 L670.0,848.31 L671.5,848.36 L673.0,848.42 L674.5,848.49 L676.0,848.57 L677.5,848.65 L679.0,848.74 L680.5,848.82 L682.1,848.91 L683.6,849.00 L685.1,849.08 L686.6,849.17 L688.1,849.26 L689.6,849.35 L691.1,849.45 L692.6,849.55 L694.1,849.66 L695.6,849.77 L697.1,849.88 L698.6,850.00 L700.1,850.11 L701.6,850.23 L703.1,850.35 L704.6,850.47 L706.1,850.59 L707.6,850.71 L709.1,850.82 L710.6,850.94 L712.1,851.05 L713.6,851.17 L715.1,851.27 L716.6,851.38 L718.1,851.47 L719.6,851.56 L721.1,851.65 L722.6,851.74 L724.1,851.82 L725.6,851.90 L727.1,851.98 L728.6,852.07 L730.1,852.15 L731.6,852.23 L733.2,852.31 L734.7,852.39 L736.2,852.48 L737.7,852.56 L739.2,852.64 L740.7,852.72 L742.2,852.80 L743.7,852.89 L745.2,852.97 L746.7,853.05 L748.2,853.13 L749.7,853.22 L751.2,853.30 L752.7,853.39 L754.2,853.49 L755.7,853.59 L757.2,853.71 L758.7,853.83 L760.2,853.97 L761.7,854.11 L763.2,854.25 L764.7,854.40 L766.2,854.55 L767.7,854.71 L769.2,854.86 L770.7,855.01 L772.2,855.16 L773.7,855.31 L775.2,855.47 L776.7,855.62 L778.2,855.77 L779.7,855.92 L781.2,856.07 L782.7,856.23 L784.3,856.38 L785.8,856.53 L787.3,856.68 L788.8,856.83 L790.3,856.99 L791.8,857.14 L793.3,857.29 L794.8,857.43 L796.3,857.57 L797.8,857.71 L799.3,857.84 L800.8,857.96 L802.3,858.08 L803.8,858.20 L805.3,858.31 L806.8,858.42 L808.3,858.53 L809.8,858.64 L811.3,858.75 L812.8,858.86 L814.3,858.97 L815.8,859.08 L817.3,859.19 L818.8,859.30 L820.3,859.41 L821.8,859.52 L823.3,859.63 L824.8,859.74 L826.3,859.85 L827.8,859.95 L829.3,860.06 L830.8,860.15 L832.3,860.22 L833.8,860.27 L835.3,860.30 L836.9,860.29 L838.4,860.26 L839.9,860.21 L841.4,860.14 L842.9,860.07 L844.4,859.99 L845.9,859.90 L847.4,859.82 L848.9,859.74 L850.4,859.65 L851.9,859.57 L853.4,859.49 L854.9,859.40 L856.4,859.32 L857.9,859.23 L859.4,859.15 L860.9,859.06 L862.4,858.97 L863.9,858.86 L865.4,858.75 L866.9,858.61 L868.4,858.46 L869.9,858.29 L871.4,858.10 L872.9,857.89 L874.4,857.68 L875.9,857.47 L877.4,857.25 L878.9,857.03 L880.4,856.81 L881.9,856.59 L883.4,856.37 L884.9,856.15 L886.4,855.94 L888.0,855.72 L889.5,855.50 L891.0,855.28 L892.5,855.06 L894.0,854.84 L895.5,854.62 L897.0,854.40 L898.5,854.18 L900.0,853.96 L901.5,853.74 L903.0,853.52 L904.5,853.30 L906.0,853.08 L907.5,852.85 L909.0,852.62 L910.5,852.38 L912.0,852.14 L913.5,851.89 L915.0,851.64 L916.5,851.38 L918.0,851.11 L919.5,850.84 L921.0,850.56 L922.5,850.27 L924.0,849.98 L925.5,849.69 L927.0,849.39 L928.5,849.09 L930.0,848.79 L931.5,848.49 L933.0,848.18 L934.5,847.88 L936.0,847.58 L937.5,847.28 L939.1,846.98 L940.6,846.68 L942.1,846.37 L943.6,846.07 L945.1,845.77 L946.6,845.47 L948.1,845.17 L949.6,844.87 L951.1,844.56 L952.6,844.26 L954.1,843.96 L955.6,843.66 L957.1,843.36 L958.6,843.06 L960.1,842.76 L961.6,842.45 L963.1,842.15 L964.6,841.85 L966.1,841.55 L967.6,841.25 L969.1,840.95 L970.6,840.64 L972.1,840.34 L973.6,840.04 L975.1,839.74 L976.6,839.44 L978.1,839.15 L979.6,838.85 L981.1,838.56 L982.6,838.27 L984.1,837.99 L985.6,837.70 L987.1,837.42 L988.6,837.14 L990.2,836.85 L991.7,836.57 L993.2,836.29 L994.7,836.01 L996.2,835.73 L997.7,835.44 L999.2,835.16 L1000.7,834.88 L1002.2,834.60 L1003.7,834.32 L1005.2,834.04 L1006.7,833.75 L1008.2,833.47 L1009.7,833.19 L1011.2,832.91 L1012.7,832.63 L1014.2,832.34 L1015.7,832.06 L1017.2,831.78 L1018.7,831.50 L1020.2,831.22 L1021.7,830.94 L1023.2,830.66 L1024.7,830.39 L1026.2,830.12 L1027.7,829.87 L1029.2,829.63 L1030.7,829.40 L1032.2,829.20 L1033.7,829.00 L1035.2,828.82 L1036.7,828.65 L1038.2,828.48 L1039.7,828.31 L1041.2,828.14 L1042.8,827.98 L1044.3,827.81 L1045.8,827.64 L1047.3,827.48 L1048.8,827.31 L1050.3,827.14 L1051.8,826.98 L1053.3,826.81 L1054.8,826.64 L1056.3,826.48 L1057.8,826.31 L1059.3,826.14 L1060.8,825.98 L1062.3,825.81 L1063.8,825.65 L1065.3,825.48 L1066.8,825.33 L1068.3,825.18 L1069.8,825.05 L1071.3,824.93 L1072.8,824.83 L1074.3,824.75 L1075.8,824.68 L1077.3,824.62 L1078.8,824.57 L1080.3,824.52 L1081.8,824.47 L1083.3,824.42 L1084.8,824.37 L1086.3,824.33 L1087.8,824.28 L1089.3,824.23 L1090.8,824.18 L1092.3,824.13 L1093.9,824.09 L1095.4,824.04 L1096.9,823.99 L1098.4,823.95 L1099.9,823.91 L1101.4,823.88 L1102.9,823.86 L1104.4,823.87 L1105.9,823.90 L1107.4,823.96 L1108.9,824.05 L1110.4,824.16 L1111.9,824.28 L1113.4,824.43 L1114.9,824.58 L1116.4,824.74 L1117.9,824.92 L1119.4,825.10 L1120.9,825.29 L1122.4,825.48 L1123.9,825.67 L1125.4,825.85 L1126.9,826.02 L1128.4,826.16 L1129.9,826.27 L1131.4,826.36 L1132.9,826.42 L1134.4,826.47 L1135.9,826.51 L1137.4,826.54 L1138.9,826.57 L1140.4,826.59 L1141.9,826.62 L1143.4,826.64 L1145.0,826.67 L1146.5,826.69 L1148.0,826.72 L1149.5,826.75 L1151.0,826.77 L1152.5,826.80 L1154.0,826.82 L1155.5,826.85 L1157.0,826.87 L1158.5,826.90 L1160.0,826.92 L1161.5,826.95 L1163.0,826.97 L1164.5,827.00 L1166.0,827.02 L1167.5,827.05 L1169.0,827.07 L1170.5,827.10"/>
<path stroke="#8318D4" d="M281.5,824.20 L283.0,816.98 L284.5,809.77 L286.0,802.55 L287.5,795.33 L289.0,788.12 L290.5,780.90 L292.0,776.38 L293.6,771.89 L295.1,767.47 L296.6,763.16 L298.1,759.01 L299.7,755.06 L301.2,751.33 L302.7,747.80 L304.2,744.45 L305.8,741.27 L307.3,738.23 L308.8,735.32 L310.3,732.52 L311.9,729.83 L313.4,727.24 L314.9,724.73 L316.4,722.28 L318.0,719.88 L319.5,717.53 L321.0,715.20 L322.5,712.89 L324.1,710.59 L325.6,708.30 L327.1,707.68 L328.6,707.08 L330.1,706.50 L331.6,705.98 L333.1,705.53 L334.6,705.18 L336.1,704.93 L337.6,704.78 L339.1,704.72 L340.6,704.74 L342.1,704.81 L343.6,704.92 L345.1,705.05 L346.6,705.20 L348.1,705.36 L349.6,705.53 L351.1,705.70 L352.6,705.88 L354.1,706.07 L355.6,706.28 L357.1,706.50 L358.6,706.73 L360.1,706.96 L361.6,707.21 L363.1,707.46 L364.7,707.73 L366.2,708.00 L367.7,708.29 L369.2,708.60 L370.7,708.91 L372.2,709.24 L373.7,709.58 L375.2,709.92 L376.7,710.26 L378.2,710.60 L379.7,710.95 L381.2,711.30 L382.7,711.65 L384.2,712.00 L385.7,712.36 L387.2,712.73 L388.7,713.12 L390.2,713.51 L391.7,713.93 L393.2,714.35 L394.7,714.79 L396.2,715.25 L397.7,715.73 L399.2,716.23 L400.7,716.76 L402.2,717.32 L403.7,717.90 L405.2,718.51 L406.7,719.12 L408.2,719.75 L409.7,720.37 L411.2,721.00 L412.7,721.63 L414.2,722.26 L415.7,722.89 L417.2,723.52 L418.7,724.17 L420.2,724.82 L421.7,725.48 L423.2,726.15 L424.7,726.82 L426.2,727.51 L427.7,728.21 L429.2,728.91 L430.7,729.63 L432.2,730.35 L433.7,731.09 L435.2,731.84 L436.7,732.59 L438.2,733.35 L439.7,734.12 L441.2,734.90 L442.8,735.69 L444.3,736.48 L445.8,737.29 L447.3,738.10 L448.8,738.93 L450.3,739.77 L451.8,740.62 L453.3,741.48 L454.8,742.35 L456.3,743.24 L457.8,744.13 L459.3,745.03 L460.8,745.94 L462.3,746.86 L463.8,747.79 L465.3,748.74 L466.8,749.70 L468.3,750.68 L469.8,751.68 L471.3,752.72 L472.8,753.78 L474.3,754.86 L475.8,755.95 L477.3,757.06 L478.8,758.16 L480.3,759.25 L481.8,760.34 L483.3,761.42 L484.8,762.49 L486.3,763.55 L487.8,764.61 L489.3,765.67 L490.8,766.74 L492.3,767.80 L493.8,768.87 L495.3,769.94 L496.8,771.02 L498.3,772.10 L499.8,773.19 L501.3,774.29 L502.8,775.41 L504.3,776.55 L505.8,777.71 L507.3,778.89 L508.8,780.08 L510.3,781.29 L511.8,782.52 L513.3,783.77 L514.8,785.04 L516.3,786.33 L517.8,787.65 L519.3,788.99 L520.9,790.34 L522.4,791.71 L523.9,793.09 L525.4,794.50 L526.9,795.92 L528.4,797.36 L529.9,798.82 L531.4,800.29 L532.9,801.78 L534.4,803.28 L535.9,804.79 L537.4,806.31 L538.9,807.84 L540.4,809.39 L541.9,810.94 L543.4,812.50 L544.9,814.06 L546.4,815.63 L547.9,817.19 L549.4,818.74 L550.9,820.28 L552.4,821.81 L553.9,823.33 L555.4,824.85 L556.9,826.36 L558.4,827.88 L559.9,829.41 L561.4,830.96 L562.9,832.54 L564.4,834.13 L565.9,835.74 L567.4,837.37 L568.9,839.00 L570.4,840.63 L571.9,842.26 L573.4,843.89 L574.9,845.52 L576.4,847.15 L577.9,848.77 L579.4,850.38 L580.9,852.00 L582.4,853.61 L583.9,855.21 L585.4,856.80 L586.9,858.39 L588.4,859.95 L589.9,861.50 L591.4,863.04 L592.9,864.56 L594.4,866.06 L595.9,867.53 L597.4,868.98 L599.0,870.37 L600.5,871.72 L602.0,873.01 L603.5,874.26 L605.0,875.46 L606.5,876.62 L608.0,877.75 L609.5,878.83 L611.0,879.86 L612.5,880.83 L614.0,881.74 L615.5,882.59 L617.0,883.39 L618.5,884.15 L620.0,884.86 L621.5,885.52 L623.0,886.12 L624.5,886.66 L626.0,887.12 L627.5,887.52 L629.0,887.87 L630.5,888.18 L632.0,888.48 L633.5,888.75 L635.0,889.03 L636.5,889.30 L638.0,882.10 L639.5,874.94 L641.0,867.87 L642.6,860.95 L644.1,854.25 L645.6,847.82 L647.1,841.70 L648.6,835.86 L650.2,830.28 L651.7,824.86 L653.2,819.56 L654.7,814.30 L656.2,811.82 L657.7,809.36 L659.2,806.94 L660.7,804.59 L662.2,802.32 L663.7,800.14 L665.2,798.04 L666.7,796.03 L668.2,794.07 L669.7,792.16 L671.2,790.28 L672.7,788.43 L674.2,786.61 L675.7,784.82 L677.2,783.05 L678.7,781.32 L680.2,779.63 L681.7,777.99 L683.2,776.39 L684.7,774.83 L686.2,773.30 L687.7,771.80 L689.2,770.33 L690.7,768.88 L692.2,767.47 L693.8,766.08 L695.3,764.72 L696.8,763.39 L698.3,762.08 L699.8,760.79 L701.3,759.52 L702.8,758.28 L704.3,757.09 L705.8,755.94 L707.3,754.84 L708.8,753.79 L710.3,752.78 L711.8,751.80 L713.3,750.84 L714.8,749.89 L716.3,748.97 L717.8,748.08 L719.3,747.21 L720.8,746.38 L722.3,745.57 L723.8,744.79 L725.3,744.02 L726.8,743.26 L728.3,742.51 L729.8,741.77 L731.3,741.03 L732.8,740.30 L734.3,739.59 L735.8,738.89 L737.3,738.20 L738.8,737.53 L740.3,736.86 L741.8,736.20 L743.3,735.54 L744.8,734.89 L746.3,734.25 L747.8,733.61 L749.3,732.98 L750.8,732.36 L752.3,731.75 L753.8,731.16 L755.3,730.57 L756.8,729.98 L758.3,729.40 L759.8,728.82 L761.3,728.24 L762.8,727.67 L764.3,727.11 L765.8,726.57 L767.3,726.04 L768.9,725.53 L770.4,725.04 L771.9,724.55 L773.4,724.08 L774.9,723.62 L776.4,723.15 L777.9,722.69 L779.4,722.23 L780.9,721.77 L782.4,721.32 L783.9,720.88 L785.4,720.45 L786.9,720.05 L788.4,719.67 L789.9,719.32 L791.4,719.00 L792.9,718.69 L794.4,718.39 L795.9,718.10 L797.4,717.82 L798.9,717.53 L800.4,717.25 L801.9,716.97 L803.4,716.69 L804.9,716.40 L806.4,716.12 L807.9,715.84 L809.4,715.56 L810.9,715.27 L812.4,714.99 L813.9,714.71 L815.4,714.43 L816.9,714.15 L818.4,713.88 L819.9,713.61 L821.4,713.36 L822.9,713.11 L824.4,712.86 L825.9,712.63 L827.4,712.40 L828.9,712.17 L830.4,711.94 L831.9,711.71 L833.4,711.49 L834.9,711.26 L836.4,711.04 L837.9,710.81 L839.4,710.58 L840.9,710.36 L842.4,710.14 L844.0,709.91 L845.5,709.70 L847.0,709.49 L848.5,709.29 L850.0,709.11 L851.5,708.93 L853.0,708.77 L854.5,708.61 L856.0,708.46 L857.5,708.31 L859.0,708.17 L860.5,708.02 L862.0,707.88 L863.5,707.73 L865.0,707.59 L866.5,707.44 L868.0,707.30 L869.5,707.15 L871.0,707.01 L872.5,706.86 L874.0,706.72 L875.5,706.58 L877.0,706.43 L878.5,706.30 L880.0,706.17 L881.5,706.05 L883.0,705.96 L884.5,705.90 L886.0,705.87 L887.5,705.88 L889.0,705.93 L890.5,706.01 L892.0,706.10 L893.5,706.20 L895.0,706.31 L896.5,706.42 L898.0,706.54 L899.5,706.65 L901.0,706.76 L902.5,706.87 L904.0,706.99 L905.5,707.10 L907.0,707.22 L908.5,707.33 L910.0,707.46 L911.5,707.58 L913.0,707.72 L914.5,707.86 L916.0,708.01 L917.5,708.17 L919.0,708.33 L920.6,708.49 L922.1,708.66 L923.6,708.83 L925.1,709.00 L926.6,709.17 L928.1,709.34 L929.6,709.50 L931.1,709.67 L932.6,709.84 L934.1,710.01 L935.6,710.18 L937.1,710.35 L938.6,710.52 L940.1,710.69 L941.6,710.86 L943.1,711.03 L944.6,711.20 L946.1,711.39 L947.6,711.58 L949.1,711.79 L950.6,712.01 L952.1,712.25 L953.6,712.50 L955.1,712.77 L956.6,713.04 L958.1,713.32 L959.6,713.60 L961.1,713.88 L962.6,714.16 L964.1,714.45 L965.6,714.73 L967.1,715.01 L968.6,715.29 L970.1,715.57 L971.6,715.85 L973.1,716.14 L974.6,716.42 L976.1,716.71 L977.6,717.01 L979.1,717.32 L980.6,717.64 L982.1,717.97 L983.6,718.32 L985.1,718.67 L986.6,719.03 L988.1,719.39 L989.6,719.75 L991.1,720.12 L992.6,720.49 L994.1,720.85 L995.7,721.22 L997.2,721.58 L998.7,721.95 L1000.2,722.32 L1001.7,722.68 L1003.2,723.05 L1004.7,723.42 L1006.2,723.78 L1007.7,724.15 L1009.2,724.51 L1010.7,724.87 L1012.2,725.23 L1013.7,725.59 L1015.2,725.94 L1016.7,726.30 L1018.2,726.65 L1019.7,727.00 L1021.2,727.35 L1022.7,727.70 L1024.2,728.05 L1025.7,728.40 L1027.2,728.75 L1028.7,729.10 L1030.2,729.44 L1031.7,729.79 L1033.2,730.14 L1034.7,730.49 L1036.2,730.84 L1037.7,731.18 L1039.2,731.52 L1040.7,731.85 L1042.2,732.16 L1043.7,732.45 L1045.2,732.72 L1046.7,732.97 L1048.2,733.20 L1049.7,733.42 L1051.2,733.63 L1052.7,733.84 L1054.2,734.04 L1055.7,734.24 L1057.2,734.44 L1058.7,734.64 L1060.2,734.84 L1061.7,735.05 L1063.2,735.25 L1064.7,735.45 L1066.2,735.65 L1067.7,735.85 L1069.2,736.05 L1070.8,736.24 L1072.3,736.43 L1073.8,736.61 L1075.3,736.78 L1076.8,736.93 L1078.3,737.08 L1079.8,737.21 L1081.3,737.34 L1082.8,737.47 L1084.3,737.59 L1085.8,737.71 L1087.3,737.82 L1088.8,737.93 L1090.3,738.04 L1091.8,738.14 L1093.3,738.22 L1094.8,738.28 L1096.3,738.33 L1097.8,738.36 L1099.3,738.38 L1100.8,738.39 L1102.3,738.40 L1103.8,738.40 L1105.3,738.40 L1106.8,738.40 L1108.3,738.40 L1109.8,737.25 L1111.3,736.11 L1112.9,734.96 L1114.4,733.82 L1115.9,732.67 L1117.4,731.52 L1118.9,730.38 L1120.4,729.24 L1122.0,728.10 L1123.5,726.98 L1125.0,725.86 L1126.5,724.76 L1128.0,723.68 L1129.5,722.62 L1131.1,721.56 L1132.6,720.52 L1134.1,719.49 L1135.6,718.47 L1137.1,717.45 L1138.6,716.46 L1140.2,715.50 L1141.7,714.57 L1143.2,713.70 L1144.7,712.88 L1146.2,712.10 L1147.7,711.36 L1149.3,710.64 L1150.8,709.94 L1152.3,709.25 L1153.8,708.56 L1155.3,707.87 L1156.8,707.18 L1158.4,706.50 L1159.9,705.81 L1161.4,705.12 L1162.9,704.44 L1164.4,703.75 L1165.9,703.06 L1167.5,702.37 L1169.0,701.69 L1170.5,701.00"/>
</g>
<g stroke="#262626" stroke-width="1" shape-rendering="crispEdges"><line x1="186.5" y1="947" x2="186.5" y2="936"/><line x1="186.5" y1="244" x2="186.5" y2="256"/><line x1="344.5" y1="947" x2="344.5" y2="936"/><line x1="344.5" y1="244" x2="344.5" y2="256"/><line x1="503.5" y1="947" x2="503.5" y2="936"/><line x1="503.5" y1="244" x2="503.5" y2="256"/><line x1="662.5" y1="947" x2="662.5" y2="936"/><line x1="662.5" y1="244" x2="662.5" y2="256"/><line x1="821.5" y1="947" x2="821.5" y2="936"/><line x1="821.5" y1="244" x2="821.5" y2="256"/><line x1="980.5" y1="947" x2="980.5" y2="936"/><line x1="980.5" y1="244" x2="980.5" y2="256"/><line x1="1139.5" y1="947" x2="1139.5" y2="936"/><line x1="1139.5" y1="244" x2="1139.5" y2="256"/><line x1="1297.5" y1="947" x2="1297.5" y2="936"/><line x1="1297.5" y1="244" x2="1297.5" y2="256"/><line x1="186" y1="244.5" x2="198" y2="244.5"/><line x1="1297" y1="244.5" x2="1286" y2="244.5"/><line x1="186" y1="361.5" x2="198" y2="361.5"/><line x1="1297" y1="361.5" x2="1286" y2="361.5"/><line x1="186" y1="478.5" x2="198" y2="478.5"/><line x1="1297" y1="478.5" x2="1286" y2="478.5"/><line x1="186" y1="596.5" x2="198" y2="596.5"/><line x1="1297" y1="596.5" x2="1286" y2="596.5"/><line x1="186" y1="713.5" x2="198" y2="713.5"/><line x1="1297" y1="713.5" x2="1286" y2="713.5"/><line x1="186" y1="830.5" x2="198" y2="830.5"/><line x1="1297" y1="830.5" x2="1286" y2="830.5"/><line x1="186" y1="947.5" x2="198" y2="947.5"/><line x1="1297" y1="947.5" x2="1286" y2="947.5"/></g>
<rect x="186.5" y="244.5" width="1111" height="703" fill="none" stroke="#262626" stroke-width="1" shape-rendering="crispEdges"/>
<g font-family="Liberation Sans, sans-serif" font-size="16" fill="#262626"><text x="186.5" y="969" text-anchor="middle">0.5</text><text x="344.5" y="969" text-anchor="middle">1</text><text x="503.5" y="969" text-anchor="middle">1.5</text><text x="662.5" y="969" text-anchor="middle">2</text><text x="821.5" y="969" text-anchor="middle">2.5</text><text x="980.5" y="969" text-anchor="middle">3</text><text x="1139.5" y="969" text-anchor="middle">3.5</text><text x="1297.5" y="969" text-anchor="middle">4</text><text x="179" y="250.0" text-anchor="end">30</text><text x="179" y="367.0" text-anchor="end">20</text><text x="179" y="484.0" text-anchor="end">10</text><text x="179" y="602.0" text-anchor="end">0</text><text x="179" y="719.0" text-anchor="end">-10</text><text x="179" y="836.0" text-anchor="end">-20</text><text x="179" y="953.0" text-anchor="end">-30</text></g>
<text x="742" y="991" text-anchor="middle" font-family="Liberation Sans, sans-serif" font-size="18" fill="#262626">Frequency (GHz)</text>
<text transform="translate(146,595.5) rotate(-90)" x="0" y="0" text-anchor="middle" font-family="Liberation Sans, sans-serif" font-size="18" fill="#262626">Magnitude (dB)</text>
<rect x="1168.5" y="257.5" width="116" height="82" fill="#fff" stroke="#262626" stroke-width="1" shape-rendering="crispEdges"/>
<g stroke-width="1.2">
<line x1="1173" y1="269.5" x2="1224" y2="269.5" stroke="#0072BD"/>
<line x1="1173" y1="289.5" x2="1224" y2="289.5" stroke="#D95319"/>
<line x1="1173" y1="308.5" x2="1224" y2="308.5" stroke="#EDB120"/>
<line x1="1173" y1="327.5" x2="1224" y2="327.5" stroke="#8318D4"/>
</g>
<g font-family="Liberation Sans, sans-serif" font-size="14.5" fill="#262626">
<text x="1228.5" y="272.5">dB(S<tspan font-size="11.5" dx="1" dy="3">11</tspan><tspan dy="-3">)</tspan></text>
<text x="1228.5" y="291.8">dB(S<tspan font-size="11.5" dx="1" dy="3">21</tspan><tspan dy="-3">)</tspan></text>
<text x="1228.5" y="311.1">dB(S<tspan font-size="11.5" dx="1" dy="3">12</tspan><tspan dy="-3">)</tspan></text>
<text x="1228.5" y="330.4">dB(S<tspan font-size="11.5" dx="1" dy="3">22</tspan><tspan dy="-3">)</tspan></text>
</g>
<g fill="#555"><circle cx="1278.8" cy="230.3" r="1.8"/><circle cx="1286.4" cy="230.3" r="1.8"/><circle cx="1294" cy="230.3" r="1.8"/></g>
</svg>
</body></html>
